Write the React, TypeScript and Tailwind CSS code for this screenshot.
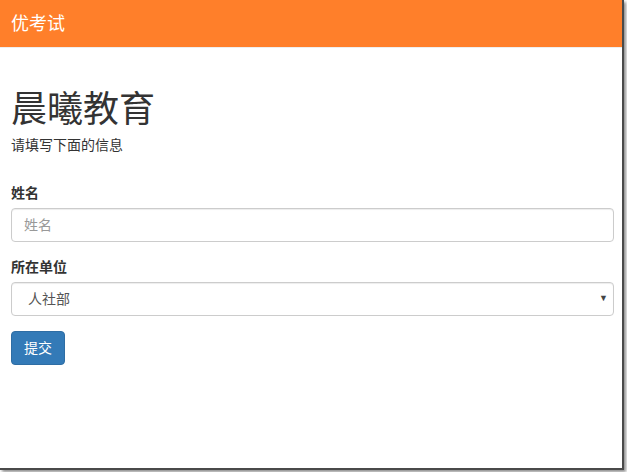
export default function App() {
  return (
    <div className="w-[627px] h-[472px] bg-white">
      <div
        className="w-[624px] h-[470px] border-r-2 border-b-2 border-[#4a4a4a] shadow-[2px_2px_3px_rgba(0,0,0,0.45)] bg-white overflow-hidden text-[#333] text-[14px]"
        style={{ fontFamily: '"Helvetica Neue", "Liberation Sans", "Noto Sans CJK SC", sans-serif' }}
      >
        {/* navbar */}
        <div className="h-[48px] bg-[#ff7f2a] border-b border-[#eeeeee] flex items-center px-[11px]">
          <span className="text-white text-[18px] leading-none">优考试</span>
        </div>

        <div className="pl-[11px] pr-[8px]">
          <h1 className="mt-[42px] text-[36px] leading-[40px] font-normal text-[#333]">晨曦教育</h1>
          <p className="mt-[5px] leading-5">请填写下面的信息</p>

          <form className="mt-[28px]">
            <div className="mb-[15px]">
              <label className="block font-bold leading-5 mb-[5px]">姓名</label>
              <input
                type="text"
                placeholder="姓名"
                className="w-full h-[34px] px-3 border border-[#ccc] rounded-[4px] shadow-[inset_0_1px_1px_rgba(0,0,0,0.075)] placeholder:text-[#999] outline-none"
              />
            </div>
            <div className="mb-[15px]">
              <label className="block font-bold leading-5 mb-[5px]">所在单位</label>
              <div className="w-full h-[34px] pl-4 pr-[5px] border border-[#ccc] rounded-[4px] shadow-[inset_0_1px_1px_rgba(0,0,0,0.075)] flex items-center justify-between text-[#555]">
                <span>人社部</span>
                <span className="text-[9px] text-[#444]">▼</span>
              </div>
            </div>
            <button
              type="button"
              className="h-[34px] px-3 bg-[#337ab7] border border-[#2e6da4] rounded-[4px] text-white leading-5"
            >
              提交
            </button>
          </form>
        </div>
      </div>
    </div>
  );
}
